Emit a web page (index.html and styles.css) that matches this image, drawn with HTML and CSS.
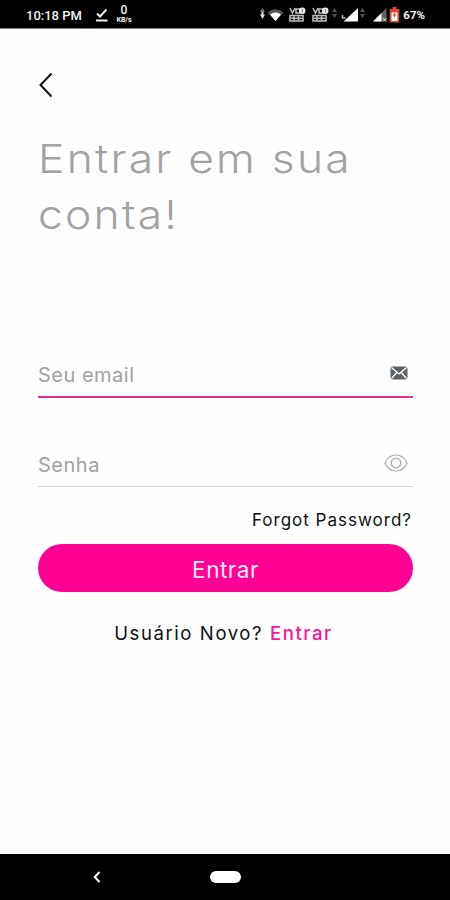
FILE: index.html
```
<!DOCTYPE html>
<html lang="pt-BR">
<head>
<meta charset="UTF-8">
<meta name="viewport" content="width=device-width, initial-scale=1.0">
<title>Entrar</title>
<link rel="stylesheet" href="styles.css">
</head>
<body>

<header class="status-bar">
    <span class="clock">10:18 PM</span>
    <svg class="check" width="13" height="14" viewBox="0 0 13 14"><path d="M2 5.500l3 3L11.500 1.500M1 12.500h11.500" fill="none" stroke="#eee" stroke-width="2"/></svg>
    <div class="speed"><b>0</b><span>KB/s</span></div>

    <div class="indicators">
        <!-- Wi-Fi -->
        <svg width="24" height="16" viewBox="0 0 24 16">
            <path d="M2.500 1L5 5H0z" fill="#777"/>
            <path d="M1.500 5h2v2.500H5L2.500 12 0 7.500h1.500z" fill="#ddd"/>
            <path d="M7.500 5.500Q15.500-1 23.500 5.500L15.500 14z" fill="#555"/>
            <path d="M10 7.500Q15.500 3.500 21 7.500L15.500 14z" fill="#fff"/>
        </svg>
        <!-- VoLTE, SIM 1 -->
        <svg class="volte" width="17" height="16" viewBox="0 0 17 16">
            <path d="M1 1l2.500 5L6 1M7 2h4v4H7zM1 8.500h13v5.500H1zM5 8.500v5.500M9.500 8.500v5.500M2 11.300h11" fill="none" stroke="#bbb" stroke-width="1.600"/>
            <circle cx="13.300" cy="3.800" r="3.200" fill="#eee"/><path d="M13.300 2v3.500" stroke="#777"/>
        </svg>
        <!-- VoLTE, SIM 2 -->
        <svg class="volte" width="17" height="16" viewBox="0 0 17 16">
            <path d="M1 1l2.500 5L6 1M7 2h4v4H7zM1 8.500h13v5.500H1zM5 8.500v5.500M9.500 8.500v5.500M2 11.300h11" fill="none" stroke="#bbb" stroke-width="1.600"/>
            <circle cx="13.300" cy="3.800" r="3.200" fill="#eee"/><path d="M13.300 2v3.500" stroke="#777"/>
        </svg>
        <!-- Signal -->
        <svg class="signal" width="33" height="16" viewBox="0 0 33 16">
            <path d="M2.500 1L5 5H0zM2.500 11L5 7H0z" fill="#555"/>
            <path d="M11.500 14.500L26 1v13.500z" fill="#fff"/>
            <path d="M10.500 8v3h3" fill="none" stroke="#bbb" stroke-width="1.500"/>
            <path d="M30.500 1L33 5h-5zM30.500 11L33 7h-5z" fill="#555"/>
        </svg>
        <svg class="signal-weak" width="14" height="16" viewBox="0 0 14 16">
            <path d="M0 14.500L13.500 1v13.500z" fill="#666"/>
            <path d="M0 14.500L8.500 6v8.500z" fill="#fff"/>
            <path d="M10 11l3.500 3.500M13.500 11L10 14.500" stroke="#ddd"/>
        </svg>
        <!-- Battery -->
        <svg class="battery" width="11" height="16" viewBox="0 0 11 16">
            <path d="M3.500 0h4v2h2.800v13.500H.7V2h2.800z" fill="#d9482b"/>
            <path d="M2.500 5.500h6V14h-6z" fill="#fff"/>
            <path d="M3.500 8h4M5.500 6v4" stroke="#d9482b"/>
        </svg>
        <span class="percent">67%</span>
    </div>
</header>

<main class="login">
    <a class="back" href="#" aria-label="Voltar">
        <svg width="15" height="26" viewBox="0 0 15 26"><path d="M13.500 1.500L2.500 13l11 11.500" fill="none" stroke="#111" stroke-width="2"/></svg>
    </a>

    <h1>Entrar em sua conta!</h1>

    <form>
        <div class="field active">
            <input class="email" type="text" placeholder="Seu email">
            <svg class="mail-icon" width="18" height="14" viewBox="0 0 18 14">
                <rect x=".5" y=".5" width="17" height="13" rx="2" fill="#5d6267"/>
                <path d="M1.500 1.500L9 8l7.500-6.500M1.500 12.500l5.300-6M16.500 12.500l-5.300-6" fill="none" stroke="#fff" stroke-width="1.300"/>
            </svg>
        </div>
        <div class="field">
            <input class="password" type="password" placeholder="Senha">
            <svg class="eye-icon" width="24" height="18" viewBox="0 0 24 18">
                <path d="M1 9C3 4 7.500 1 12 1s9 3 11 8c-2 5-6.500 8-11 8S3 14 1 9z" fill="none" stroke="#aaa" stroke-width="1.200"/>
                <circle cx="12" cy="9" r="4.800" fill="none" stroke="#aaa" stroke-width="1.300"/>
            </svg>
        </div>
        <a class="forgot" href="#">Forgot Password?</a>
        <button class="btn" type="button">Entrar</button>
    </form>

    <p class="signup">Usuário Novo? <a href="#">Entrar</a></p>
</main>

<footer class="nav-bar">
    <svg class="nav-back" width="8" height="12" viewBox="0 0 8 12"><path d="M6.500 1L1.800 6l4.700 5" fill="none" stroke="#fff" stroke-width="2"/></svg>
    <div class="home"></div>
</footer>

</body>
</html>
```

FILE: styles.css
```
* {
    box-sizing: border-box;
}
body {
    margin: 0;
    height: 900px;
    display: flex;
    flex-direction: column;
    background: #fefefe;
    font-family: Inter, "Open Sans", sans-serif;
    font-optical-sizing: none;
    color: #111;
}
a {
    color: inherit;
    text-decoration: none;
}
svg {
    display: block;
    flex: none;
}

/* Status bar */
.status-bar {
    height: 29px;
    display: flex;
    align-items: center;
    padding: 0 25px 0 26px;
    background: #000;
    border-bottom: 1px solid #777;
    color: #f2f2f2;
    font-family: Roboto, sans-serif;
}
.clock {
    width: 69px;
    font-size: 13px;
    font-weight: 500;
    white-space: nowrap;
    padding-top: 2px;
}
.check { margin-top: 1px; }
.speed {
    width: 18px;
    margin-left: 7px;
    text-align: center;
}
.speed b {
    display: block;
    font-size: 12px;
    line-height: 12px;
    font-weight: 500;
}
.speed span {
    display: block;
    font-size: 7px;
    line-height: 8px;
    font-weight: 700;
}
.indicators {
    display: flex;
    align-items: center;
    margin-left: auto;
    padding-top: 1px;
}
.volte { margin-left: 5px; }
.volte + .volte { margin-left: 6px; }
.signal { margin-left: 3px; }
.signal-weak { margin-left: 8px; }
.battery { margin-left: 2px; }
.percent {
    margin-left: 3px;
    font-size: 11.5px;
    font-weight: 700;
    line-height: 14px;
}

/* Login form */
.login {
    flex: 1;
    padding: 43px 37px 0 38px;
}
.back {
    display: block;
    width: 15px;
}
h1 {
    margin: 33px 0 0;
    font-size: 40px;
    line-height: 56px;
    font-weight: 350;
    letter-spacing: 2px;
    color: #a2a2a2;
    transform: scaleX(1.11);
    transform-origin: left;
}
form { margin-top: 107px; }
.field {
    display: flex;
    align-items: center;
    height: 48px;
    border-bottom: 1px solid #d5d5d5;
}
.field.active {
    border-bottom: 2px solid #e8308a;
    margin-bottom: 41px;
}
.field input {
    flex: 1;
    min-width: 0;
    padding: 4px 0 0;
    border: 0;
    outline: 0;
    background: none;
    font-family: inherit;
    font-size: 20px;
    letter-spacing: 0.5px;
}
.field input::placeholder { color: #a2a2a2; }
.mail-icon { margin-right: 5px; }
.eye-icon { margin-right: 5px; }
.forgot {
    display: block;
    margin: 21px 1px 0 0;
    text-align: right;
    font-size: 17px;
    line-height: 24px;
    letter-spacing: 1px;
}
.btn {
    display: block;
    width: 100%;
    height: 48px;
    margin-top: 12px;
    padding: 3px 0 0;
    border: 0;
    border-radius: 24px;
    background: #ff0095;
    color: #ffe9f5;
    font-family: inherit;
    font-size: 22.5px;
    letter-spacing: 0.5px;
}
.signup {
    margin: 28px 0 0;
    padding-right: 4px;
    text-align: center;
    font-size: 18.5px;
    line-height: 26px;
    letter-spacing: 1.6px;
    white-space: nowrap;
}
.signup a {
    color: #ff1495;
    font-weight: 500;
}

/* Navigation bar */
.nav-bar {
    display: flex;
    align-items: center;
    height: 46px;
    padding: 0 93px;
    background: #000;
}
.home {
    width: 31px;
    height: 12px;
    margin-left: 109px;
    border-radius: 6px;
    background: #fff;
}
```
